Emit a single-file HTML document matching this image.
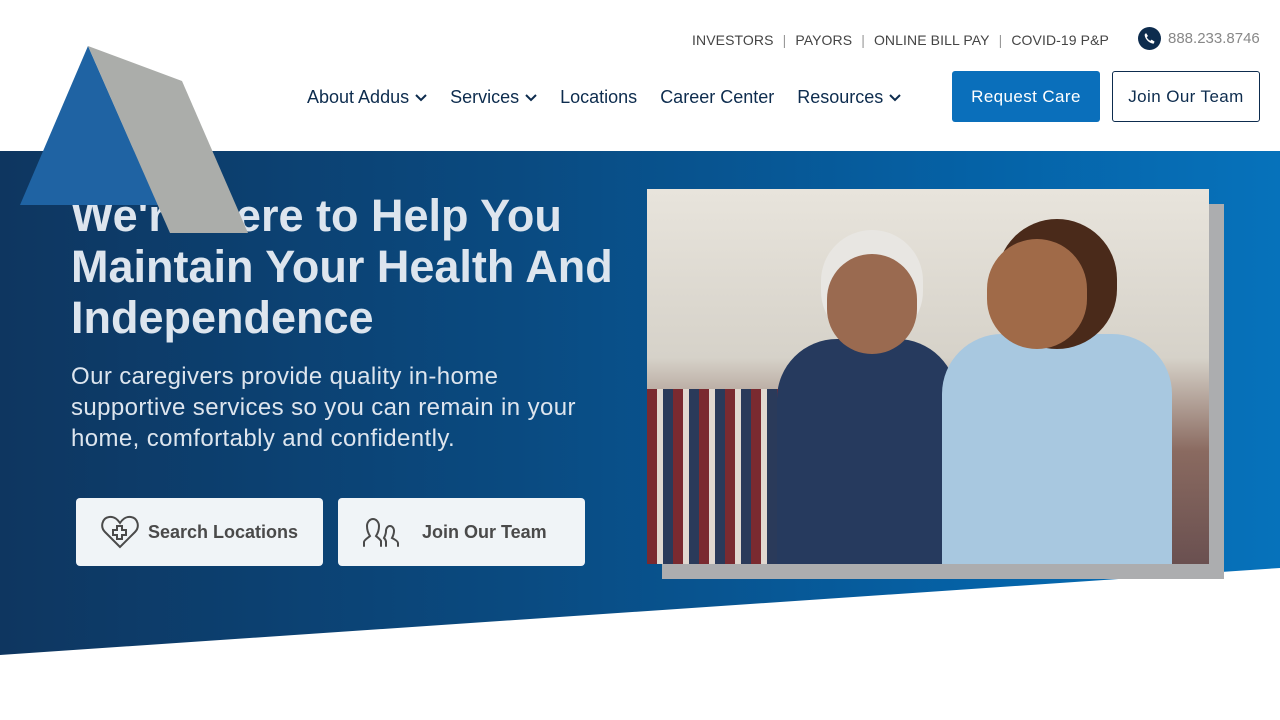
<!DOCTYPE html>
<html><head><style>
*{margin:0;padding:0;box-sizing:border-box}
body{width:1280px;height:720px;overflow:hidden;background:#fff;font-family:"Liberation Sans",sans-serif;position:relative}
.top{position:absolute;top:32px;left:692px;font-size:14px;color:#444;letter-spacing:.1px}
.top span.sep{color:#999;margin:0 9px}
.phone{position:absolute;top:27px;left:1138px;display:flex;align-items:center;gap:7px;color:#888;font-size:15px}
.phone i{width:23px;height:23px;border-radius:50%;background:#0d2c4e;display:inline-block;position:relative}
.nav{position:absolute;top:87px;left:307px;font-size:18px;color:#0d2c4e;display:flex;gap:23px}
.nav svg{vertical-align:middle;margin-left:6px}
.btn1{position:absolute;left:952px;top:71px;width:148px;height:51px;background:#0a6fbb;color:#fff;border-radius:3px;font-size:17px;display:flex;align-items:center;justify-content:center;letter-spacing:.4px}
.btn2{position:absolute;left:1112px;top:71px;width:148px;height:51px;border:1px solid #0d2c4e;color:#0d2c4e;border-radius:3px;font-size:17px;display:flex;align-items:center;justify-content:center;letter-spacing:.4px}
.hero{position:absolute;left:0;top:151px;width:1280px;height:504px;background:linear-gradient(90deg,#0e3660 0%,#0a4a80 40%,#0561a5 75%,#0672bb 100%);clip-path:polygon(0 0,100% 0,100% 417px,0 504px)}
h1{position:absolute;left:71px;top:190px;font-size:45px;line-height:51px;color:#dde5ee;font-weight:bold;letter-spacing:0}
p.sub{position:absolute;left:71px;top:361px;width:540px;font-size:24px;line-height:31px;color:#dde5ee;letter-spacing:.4px}
.hb{position:absolute;top:498px;width:247px;height:68px;background:#f0f4f7;border-radius:4px;display:flex;align-items:center;font-size:18px;font-weight:bold;color:#4a4a4a}
.shadow{position:absolute;left:662px;top:204px;width:562px;height:375px;background:#acadaf}
.photo{position:absolute;left:647px;top:189px;width:562px;height:375px;background:linear-gradient(180deg,#e8e4dc 0%,#d6d2c9 45%,#8a6a60 70%,#6a5050 100%);overflow:hidden}
</style></head><body>
<div class="top">INVESTORS<span class="sep">|</span>PAYORS<span class="sep">|</span>ONLINE BILL PAY<span class="sep">|</span>COVID-19 P&amp;P</div>
<div class="phone"><i><svg width="23" height="23" viewBox="0 0 23 23"><path d="M8 6l2 3-1.3 1.3c.8 1.6 2 2.8 3.6 3.6L13.6 12.6l3 2-1 2.2c-4.5-.5-8.6-4.6-9-9z" fill="#fff"/></svg></i>888.233.8746</div>
<div class="nav"><span>About Addus<svg width="12" height="8"><path d="M1 1l5 5 5-5" stroke="#0d2c4e" stroke-width="2" fill="none"/></svg></span><span>Services<svg width="12" height="8"><path d="M1 1l5 5 5-5" stroke="#0d2c4e" stroke-width="2" fill="none"/></svg></span><span>Locations</span><span>Career Center</span><span>Resources<svg width="12" height="8"><path d="M1 1l5 5 5-5" stroke="#0d2c4e" stroke-width="2" fill="none"/></svg></span></div>
<div class="btn1">Request Care</div>
<div class="btn2">Join Our Team</div>
<div class="hero"></div>
<h1>We're Here to Help You<br>Maintain Your Health And<br>Independence</h1>
<p class="sub">Our caregivers provide quality in-home supportive services so you can remain in your home, comfortably and confidently.</p>
<div class="hb" style="left:76px"><svg style="margin:0 8px 0 24px" width="40" height="34" viewBox="0 0 40 34"><path d="M20 32L5 17C0 12 2 3 9 2c5-1 9 3 11 6 2-3 6-7 11-6 7 1 9 10 4 15z" fill="none" stroke="#4a4a4a" stroke-width="2"/><path d="M17 11h5v4h4v5h-4v4h-5v-4h-4v-5h4z" fill="none" stroke="#4a4a4a" stroke-width="2"/></svg>Search Locations</div>
<div class="hb" style="left:338px"><svg style="margin:0 20px 0 24px" width="40" height="32" viewBox="0 0 40 32"><path d="M2 30v-4c0-2 5-5 6-6-2-3-3-6-3-10 0-4 3-7 6-7s6 3 6 7c0 4-1 7-3 10 1 1 4 3 5 5v5" fill="none" stroke="#4a4a4a" stroke-width="2" stroke-linecap="round"/><path d="M24 30v-4c0-1 -1-3-2-4 1-2 2-4 2-7 0-3 2-5 4-5s4 2 4 5c0 3-1 5-2 7 2 1 6 3 6 5v3" fill="none" stroke="#4a4a4a" stroke-width="2" stroke-linecap="round"/></svg>Join Our Team</div>
<div class="shadow"></div>
<div class="photo">
<div style="position:absolute;left:0;top:200px;width:300px;height:175px;background:repeating-linear-gradient(90deg,#7a2a30 0 10px,#e0d8d0 10px 16px,#2a3a5a 16px 26px)"></div>
<div style="position:absolute;left:130px;top:150px;width:180px;height:225px;background:#263a5e;border-radius:60px 60px 0 0"></div>
<div style="position:absolute;left:180px;top:65px;width:90px;height:100px;background:#9a6a50;border-radius:45px;box-shadow:0 -18px 0 6px #e8e6e2"></div>
<div style="position:absolute;left:295px;top:145px;width:230px;height:230px;background:#a8c8e0;border-radius:60px 60px 0 0"></div>
<div style="position:absolute;left:340px;top:50px;width:100px;height:110px;background:#a06a48;border-radius:50px;box-shadow:20px -10px 0 10px #4a2a1a"></div>
</div>
<svg style="position:absolute;left:0;top:0" width="260" height="240"><polygon points="88,46 20,205 158,205" fill="#1f63a3"/><polygon points="88,46 182,81 248,233 170,233" fill="#abadaa"/></svg>
</body></html>
